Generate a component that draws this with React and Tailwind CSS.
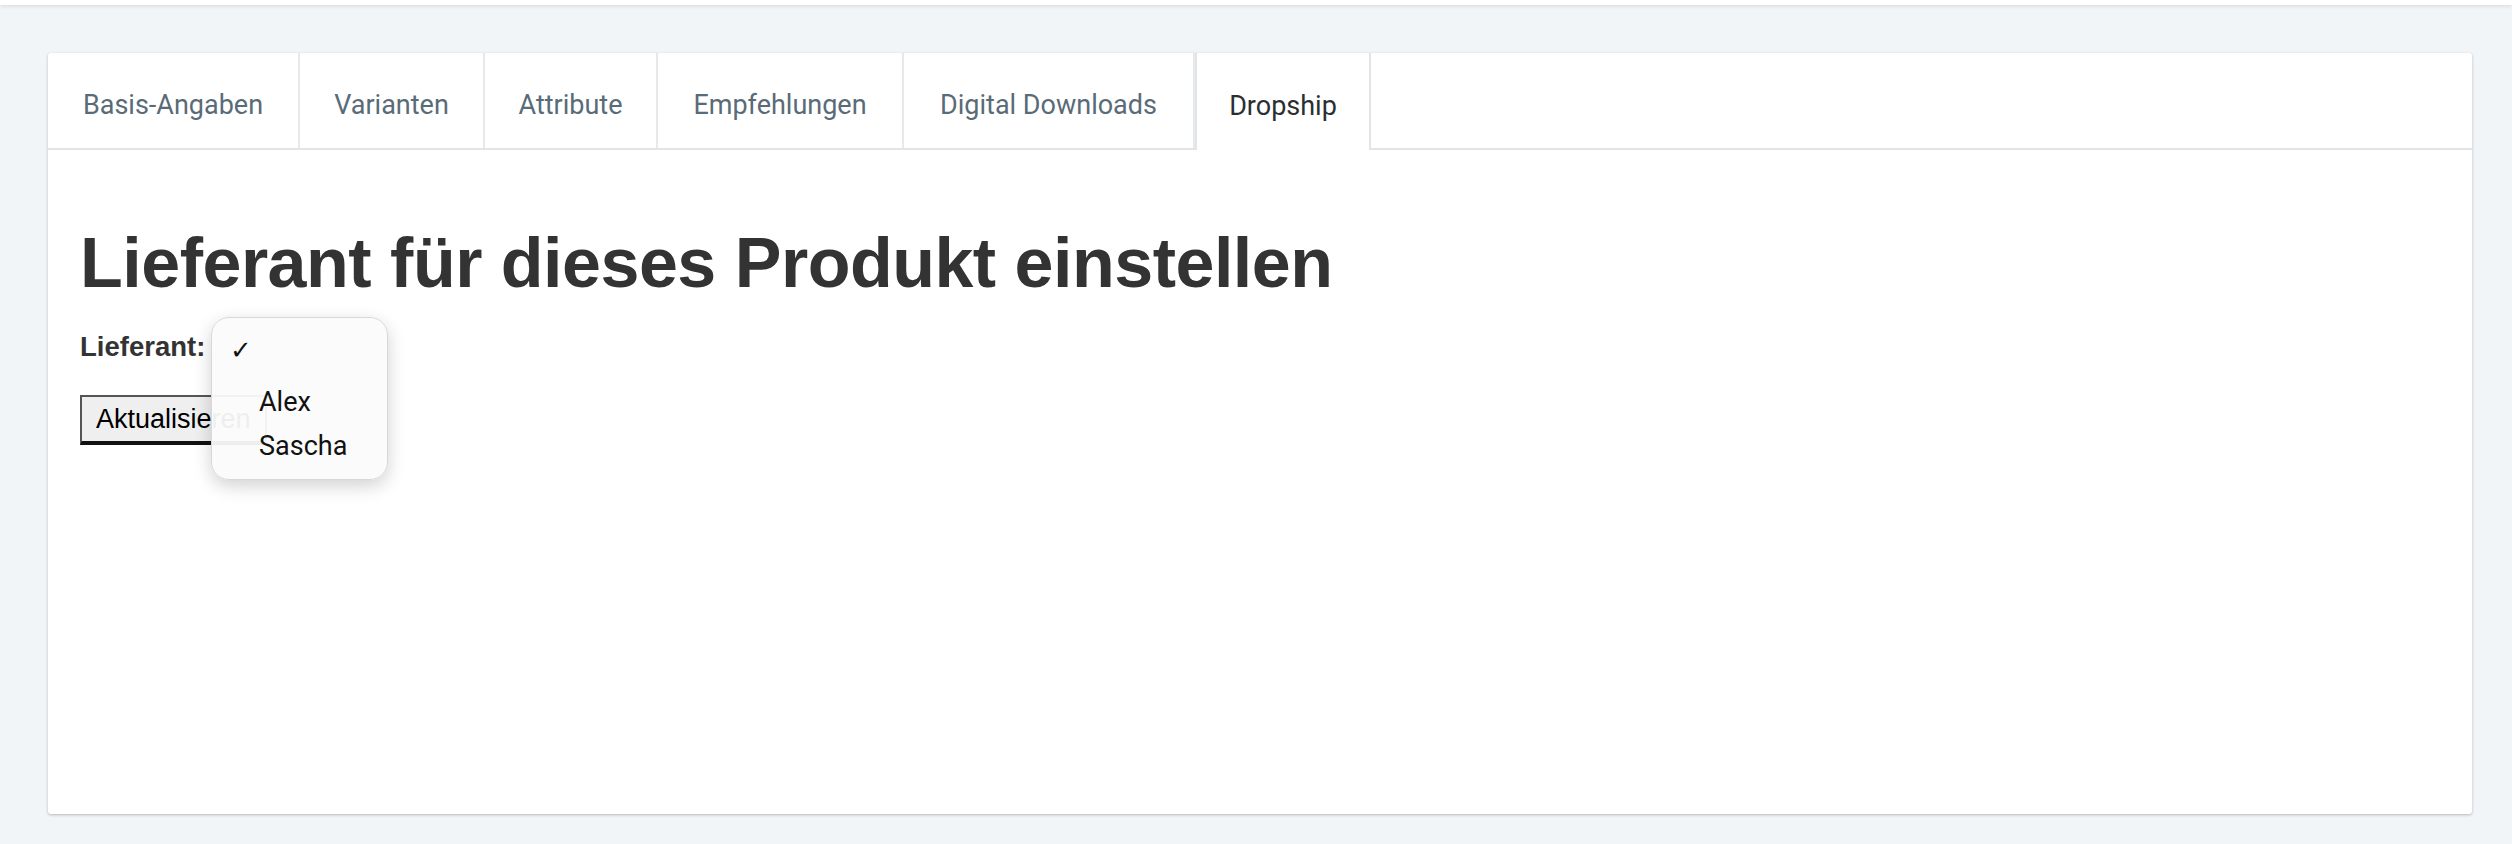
export default function App() {
  const tabs = ["Basis-Angaben", "Varianten", "Attribute", "Empfehlungen", "Digital Downloads", "Dropship"];
  const widths = ["w-[252px]", "w-[185px]", "w-[173px]", "w-[246px]", "w-[291px]", "w-[176px]"];
  return (
    <div className="w-[2512px] h-[844px] bg-[#f2f5f8] relative" style={{ fontFamily: '"Liberation Sans", Arial, sans-serif' }}>
      <div className="h-[5px] bg-white shadow-[0_1px_4px_rgba(0,0,0,0.12)]" />
      <div className="pt-[48px] px-[48px] pr-[40px]">
        <div className="bg-white h-[761px] rounded-[3px] shadow-[0_1px_3px_rgba(0,0,0,0.25)] flex flex-col">
          <div className="flex h-[97px] border-b-2 border-[#e2e5e8]" style={{ fontFamily: 'Roboto, sans-serif' }}>
            {tabs.map((t, i) => (
              <div key={t} className={`${widths[i]} flex items-center justify-center pt-[10px] text-[27px] ${i === 5 ? "text-[#2a2f33] bg-white border-x-2 border-[#e2e5e8] -mb-[2px]" : "text-[#5a6b78] border-r-2 border-[#e6e8ea]"}`}>
                {t}
              </div>
            ))}
          </div>
          <div className="px-[32px] pt-[78px] text-[#333]">
            <h1 className="text-[70px] font-bold leading-none tracking-[-0.5px]">Lieferant für dieses Produkt einstellen</h1>
            <div className="mt-[28px] flex items-center">
              <span className="text-[27.5px] font-bold">Lieferant:</span>
            </div>
            <button className="mt-[28px] h-[50px] px-[14px] text-[27px] text-black bg-[#efefef] border-2 border-[#555] border-b-4 border-b-[#111]">Aktualisieren</button>
          </div>
        </div>
      </div>
      <div className="absolute left-[211px] top-[317px] w-[177px] h-[163px] rounded-[18px] bg-[#fbfbfb]/95 border border-[#d8d8d8] shadow-[0_6px_18px_rgba(0,0,0,0.18)] text-[27px] text-[#111] flex flex-col pt-[14px]" style={{ fontFamily: 'Roboto, sans-serif' }}>
        <div className="pl-[18px] h-[36px] text-[26px] leading-[36px]">✓</div>
        <div className="pl-[47px] mt-[10px] h-[48px] leading-[48px]">Alex</div>
        <div className="pl-[47px] h-[48px] leading-[40px]">Sascha</div>
      </div>
    </div>
  );
}
